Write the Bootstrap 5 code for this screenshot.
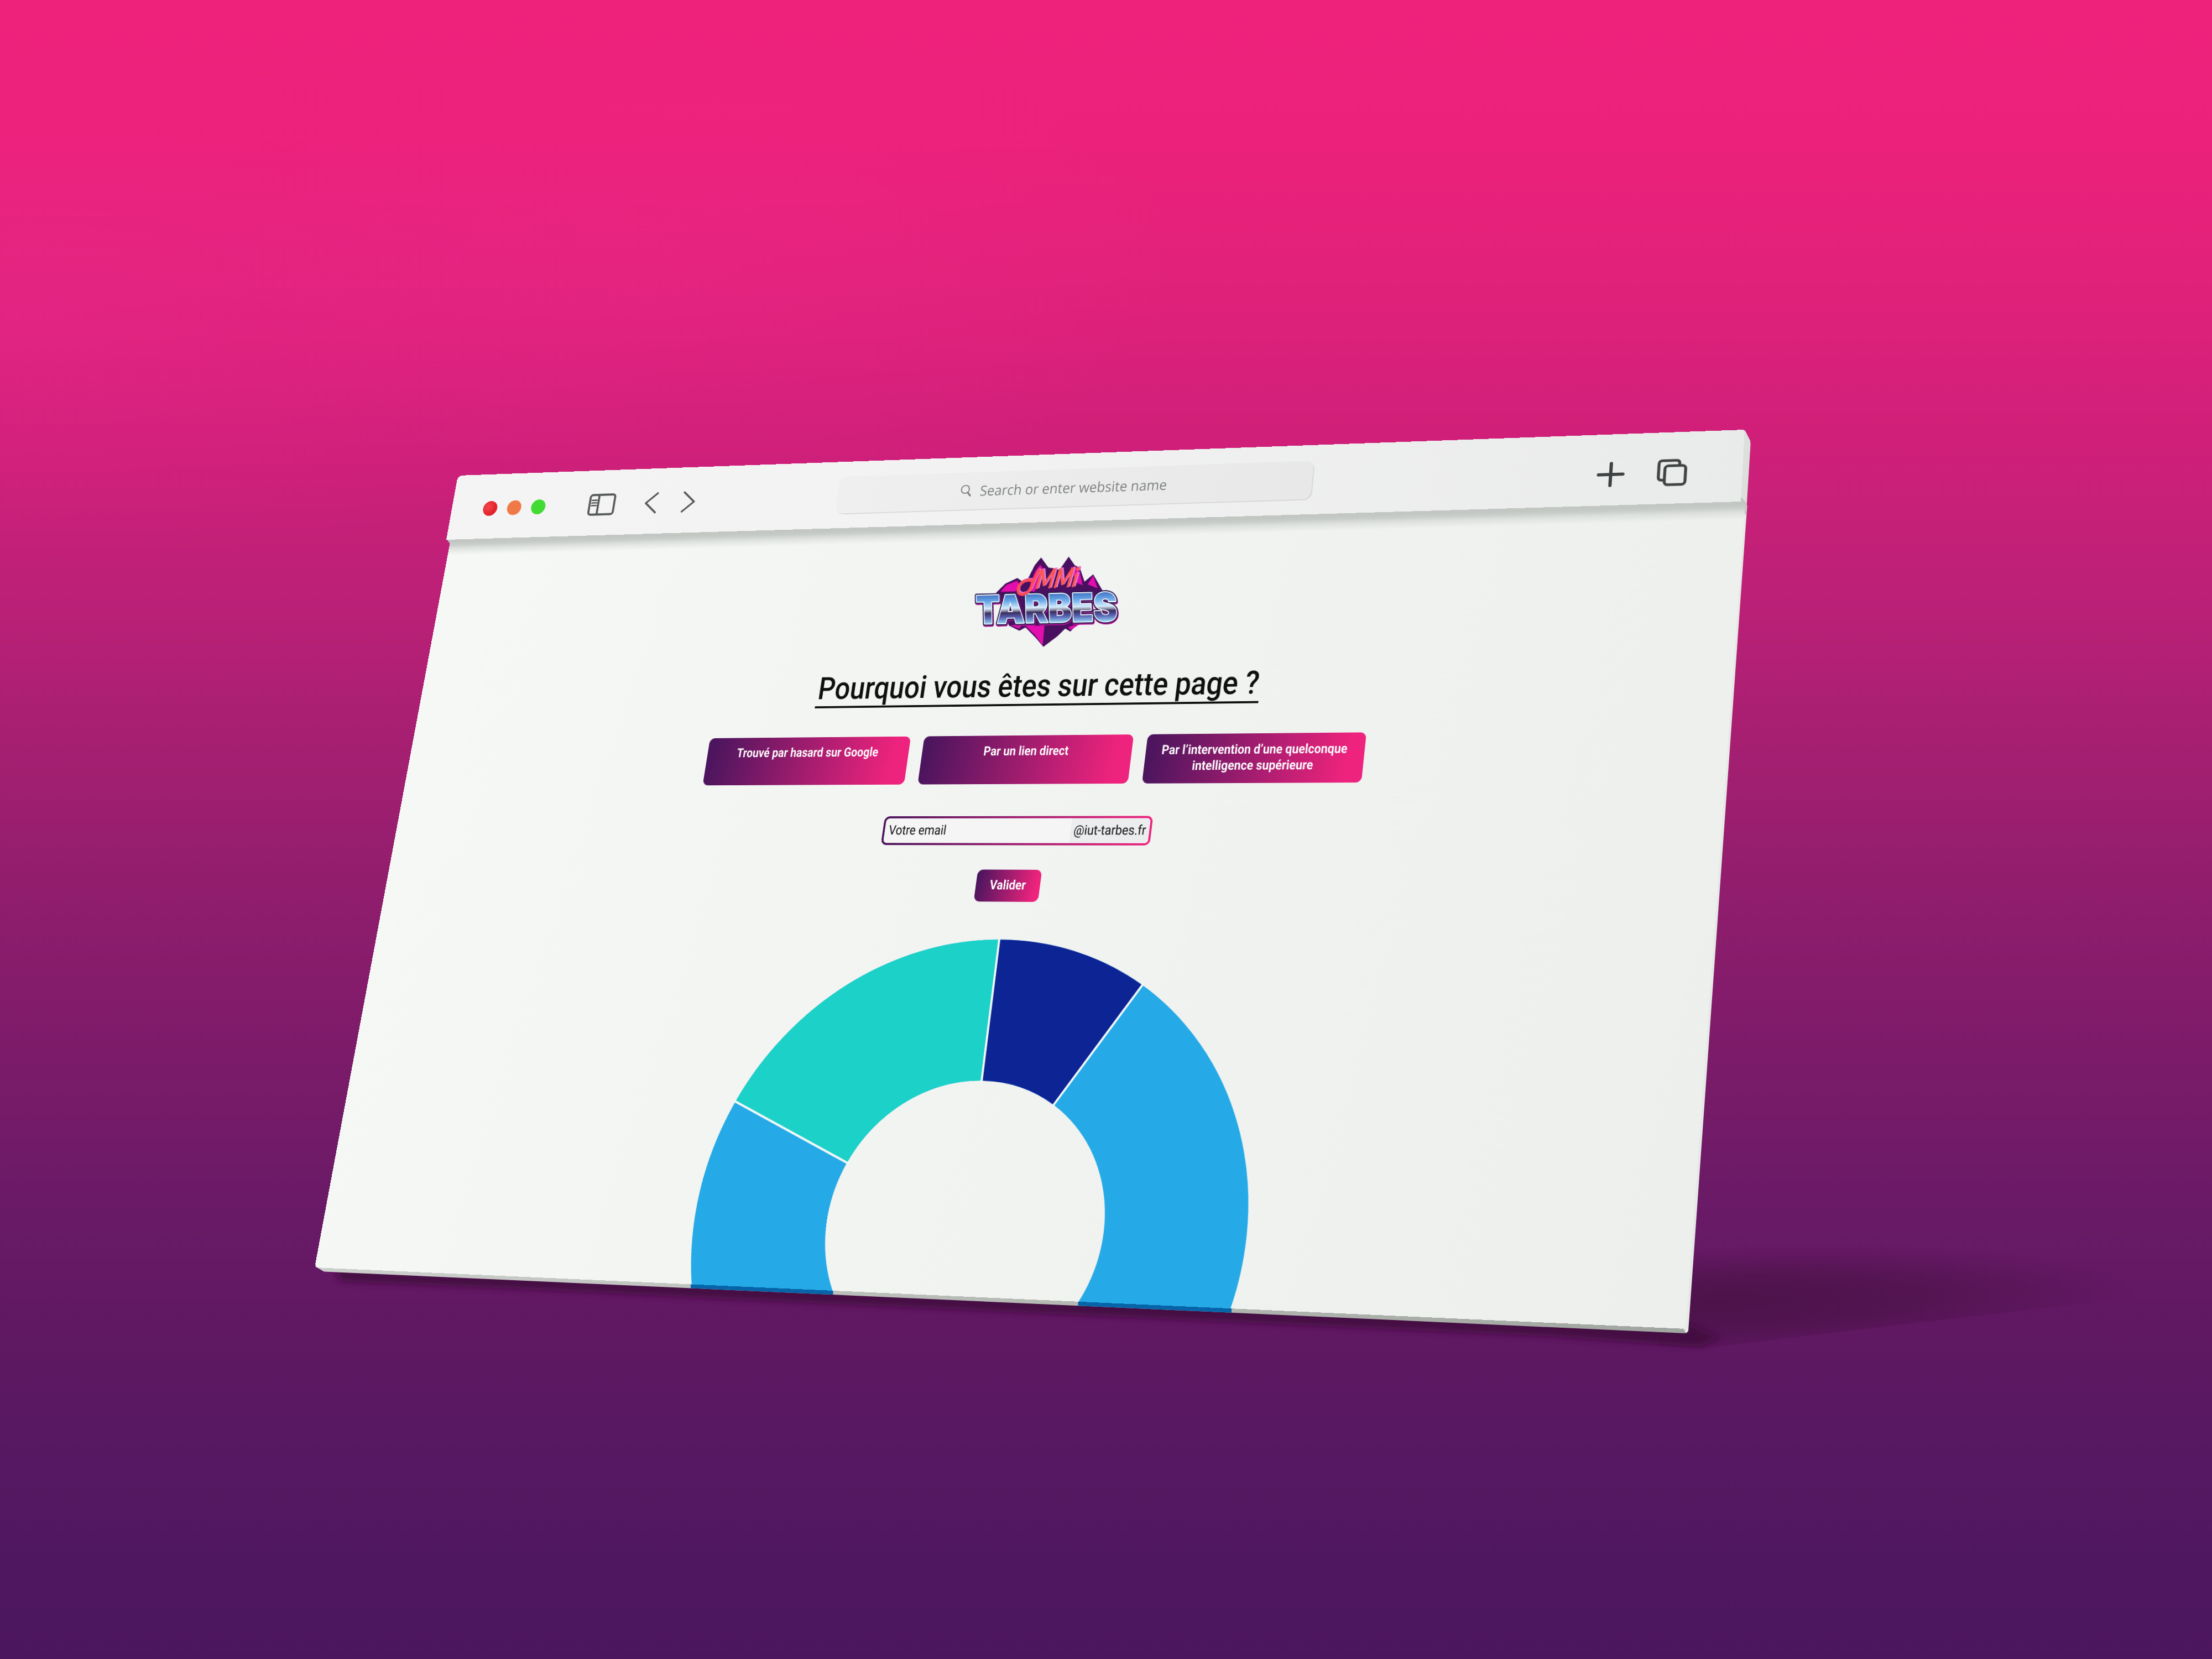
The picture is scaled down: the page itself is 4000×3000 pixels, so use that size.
<!DOCTYPE html>
<html lang="fr">
<head>
<meta charset="utf-8">
<title>MMI Tarbes</title>
<link href="https://cdn.jsdelivr.net/npm/bootstrap@5.3.0/dist/css/bootstrap.min.css" rel="stylesheet">
<style>
  body{width:4000px;height:3000px;margin:0;font-family:Roboto,"Liberation Sans",sans-serif;
    background:
      radial-gradient(ellipse 1300px 460px at 60px 560px,rgba(240,45,150,.28),transparent 100%),
      radial-gradient(ellipse 900px 420px at 1280px 480px,rgba(245,45,150,.2),transparent 100%),
      linear-gradient(180deg,#ee227b 0,#eb217b 260px,#e0217a 520px,#cf1f79 800px,#bd2077 1060px,#a61f71 1340px,#911d6d 1600px,#7c1b69 1900px,#6a1a66 2170px,#601862 2400px,#571862 2620px,#4e1760 2850px,#4c165f 3000px)}
  .scene-layer{left:0;top:0;width:4000px;height:3000px}
  /* both planes are flat boxes projected into the scene */
  .plane{left:0;top:0;width:2560px;transform-origin:0 0}
  .page-plane{height:1440px;background:linear-gradient(100deg,#f6f8f5 0,#f2f4f2 45%,#edefed 100%);border-radius:0 0 8px 8px;
    transform:matrix3d(.7723743,-.0677324,0,-.0000451424,-.1939653,.8151353,0,-.0000418742,0,0,1,0,814,980,0,1)}
  .page-plane::before{content:"";position:absolute;left:0;right:0;top:0;height:28px;background:linear-gradient(180deg,#c3c7c3 0,#c9cdc9 6px,rgba(214,218,214,.75) 14px,rgba(240,242,240,0) 28px)}
  .bar-plane{height:136px;background:linear-gradient(90deg,#f4f4f4 0,#f2f2f2 45%,#e9eaea 100%);border-radius:10px 8px 0 0;
    transform:matrix3d(.7721329,-.0661251,0,-.000043376,-.1918684,.8076404,0,-.0000464147,0,0,1,0,828,860,0,1)}
  .bar-left{padding-left:70px;width:830px}
  .dot{width:31px;height:31px;margin-right:22px}
  .search-field{width:942px;height:75px;border-radius:15px;background:linear-gradient(90deg,#efefef,#e8e8e8);box-shadow:2px 2px 1px rgba(150,155,150,.28);
    font:400 28px "Open Sans",sans-serif;color:#7d8080}
  .bar-right{width:788px;padding:18px 98px 0 0}
  .fit{display:block;white-space:nowrap;flex:none}
  .site{width:2552px;padding-top:62px}
  .ask{width:868px;line-height:67.5px;font-size:61px;font-weight:500;color:#0d100e;margin:40px 0 57px;border-bottom:4px solid #0d100e}
  .choices{gap:27px}
  .grad{background:linear-gradient(97deg,#4c155e 3%,#ee237d 92%);border:0;color:#fff;border-radius:11px;font-size:24.5px;line-height:30.6px;font-weight:700}
  .choice{width:409px;height:93px;padding:15px 0 0}
  .mail{width:521px;height:55px;margin-top:61px;border-radius:11px;padding:4px;background:linear-gradient(90deg,#4c155e,#ee237d);font-size:25px;line-height:46px;color:#111}
  .mail-in{background:#f4f5f4;border-radius:7px;overflow:hidden;height:47px}
  .mail-suffix{width:150px;background:#ecedee}
  .send{width:124px;height:60px;margin-top:46px;padding:14px 0 0}
  .donut{width:1040px;height:1040px;margin-top:70px;transform:translateX(2px)}
</style>
<script src="https://cdn.jsdelivr.net/npm/bootstrap@5.3.0/dist/js/bootstrap.bundle.min.js"></script>
</head>
<body class="position-relative overflow-hidden">

<!-- cast shadows and the visible thickness of the slabs -->
<svg class="scene-layer position-absolute" viewBox="0 0 4000 3000">
  <defs>
    <filter id="b6" x="-10%" y="-50%" width="120%" height="200%"><feGaussianBlur stdDeviation="6"/></filter>
    <radialGradient id="fade"><stop offset="0" stop-color="#430f3f" stop-opacity=".7"/><stop offset=".45" stop-color="#430f3f" stop-opacity=".5"/><stop offset="1" stop-color="#430f3f" stop-opacity="0"/></radialGradient>
    <linearGradient id="edge" x1="570" x2="3052" y1="0" y2="0" gradientUnits="userSpaceOnUse"><stop offset="0" stop-color="#cccfcb"/><stop offset="1" stop-color="#a0a69f"/></linearGradient>
    <clipPath id="edgeClip"><path d="M569.500 2290 L586 2299.500 L3047 2411 L3051 2408 L3046 2380 L620 2270Z"/></clipPath>
    <clipPath id="farClip"><path d="M3000 2200H4000V2330L3075 2438L3000 2434Z"/></clipPath>
  </defs>
  <g clip-path="url(#farClip)"><ellipse cx="3110" cy="2355" rx="760" ry="100" fill="url(#fade)" transform="rotate(-2 3110 2355)"/></g>
  <path d="M605 2295 L3060 2395 L3110 2420 L3075 2435 L2800 2416 L1340 2350 L950 2331 L615 2317Z" fill="#43103f" opacity=".9" filter="url(#b6)"/>
  <g clip-path="url(#edgeClip)">
    <path d="M560 2260H3060V2420H560Z" fill="url(#edge)"/>
    <path d="M1249 2290H1506.500V2360H1249Z M1949.500 2310H2227V2400H1949.500Z" fill="#0764a8"/>
  </g>
  <path d="M3140 914 L3159.500 914 L3053 2407 L3049 2411 L3045 2404 L3030 2390Z" fill="#e6e9e6"/>
  <path d="M3140 779 L3151 777 Q3155 777 3157 781 L3165 797 L3165.500 804 L3158.500 916 L3140 916Z" fill="#dcdfdc"/>
  <path d="M807 974 L3150 900 L3158.500 910 L3158 930 L820 1000 L813 982Z" fill="#c3c7c3"/>
</svg>

<main class="plane page-plane position-absolute overflow-hidden">
  <div class="site d-flex flex-column align-items-center">
    <svg width="296" height="182" viewBox="0 0 296 182" class="flex-shrink-0 overflow-visible">
      <defs>
        <linearGradient id="chrome" x1="0" y1="-160" x2="0" y2="4" gradientUnits="userSpaceOnUse">
          <stop offset="0" stop-color="#3f6fc0"/><stop offset=".25" stop-color="#6aa9ea"/><stop offset=".48" stop-color="#d4ecfb"/><stop offset=".57" stop-color="#8d8fa6"/><stop offset=".63" stop-color="#3a2d5e"/><stop offset=".78" stop-color="#5560b0"/><stop offset="1" stop-color="#9adcf8"/>
        </linearGradient>
      </defs>
      <g transform="matrix(.365 .008 .0487 .3617 -32.24 -19)">
        <path d="M185 245 L235 195 L300 165 L330 185 L360 165 L395 95 L430 52 L470 108 L500 112 L530 120 L580 48 L612 95 L640 110 L665 185 L712 145 L765 240 L640 400 L588 456 L560 440 L520 480 L442 540 L400 490 L345 435 L312 453 L255 425Z" fill="#4a1060"/>
        <path d="M208 240 L240 203 L300 180 L312 205 L290 238Z M372 190 L400 125 L425 92 L445 120 L420 150 L395 240 L370 235Z M590 105 L635 112 L655 205 L620 190Z M682 200 L712 152 L735 222Z M345 425 L448 425 L438 532 L400 480Z M262 424 L325 420 L312 442Z M575 432 L640 415 L590 448Z" fill="#e20fae"/>
        <g transform="translate(76 416) rotate(-1.4)" font-family="Inter,Lato,sans-serif" font-weight="900" font-size="212" stroke-linejoin="round">
          <text textLength="765" lengthAdjust="spacingAndGlyphs" fill="#b0128f" stroke="#b0128f" stroke-width="24" x="2" y="5">TARBES</text>
          <text textLength="765" lengthAdjust="spacingAndGlyphs" fill="#2b1f55" stroke="#2b1f55" stroke-width="22">TARBES</text>
          <text textLength="765" lengthAdjust="spacingAndGlyphs" fill="#fff" stroke="#fff" stroke-width="10">TARBES</text>
          <text textLength="765" lengthAdjust="spacingAndGlyphs" fill="url(#chrome)">TARBES</text>
        </g>
        <path d="M376 178 C340 172 304 195 302 228 C302 262 352 262 372 222 C384 198 395 160 418 124" fill="none" stroke="#e07ad8" stroke-width="16" stroke-linecap="round" transform="translate(6 -4)"/>
        <path d="M376 178 C340 172 306 195 304 232 C304 266 352 262 372 222 C384 198 395 160 418 124" fill="none" stroke="#fb4a58" stroke-width="16" stroke-linecap="round"/>
        <g transform="translate(394 226) rotate(-3) skewX(-14)" font-family="Lato,sans-serif" font-style="italic" font-weight="700" font-size="148">
          <text x="8" y="-4" textLength="226" lengthAdjust="spacingAndGlyphs" fill="#e07ad8">MMi</text>
          <text textLength="226" lengthAdjust="spacingAndGlyphs" fill="#fc5552">MMi</text>
        </g>
      </g>
    </svg>

    <h1 class="ask d-flex justify-content-center"><span class="fit" data-width="864">Pourquoi vous êtes sur cette page ?</span></h1>

    <div class="choices d-flex">
      <button class="btn grad choice d-flex flex-column align-items-center"><span class="fit" data-width="288">Trouvé par hasard sur Google</span></button>
      <button class="btn grad choice d-flex flex-column align-items-center"><span class="fit" data-width="166">Par un lien direct</span></button>
      <button class="btn grad choice d-flex flex-column align-items-center"><span class="fit" data-width="347">Par l’intervention d’une quelconque</span><span class="fit" data-width="226">intelligence supérieure</span></button>
    </div>

    <div class="mail">
      <div class="mail-in d-flex justify-content-between">
        <span class="fit ms-2" data-width="113" data-origin="left">Votre email</span>
        <span class="mail-suffix d-flex justify-content-center"><span class="fit" data-width="138">@iut-tarbes.fr</span></span>
      </div>
    </div>

    <button class="btn grad send d-flex flex-column align-items-center"><span class="fit" data-width="70">Valider</span></button>

    <svg class="donut flex-shrink-0" viewBox="-517 -517 1034 1034">
      <g transform="rotate(-90.5)" fill="none" stroke-width="257">
        <circle r="388" stroke="#25aae7"/>
        <circle r="388" stroke="#0c2494" pathLength="11" stroke-dasharray="1 10"/>
        <circle r="388" stroke="#1bd1c8" pathLength="11" stroke-dasharray="2 9" stroke-dashoffset="-9"/>
        <g stroke="#f4f8f8" stroke-width="4">
          <path d="M255 0H520"/><path d="M255 0H520" transform="rotate(32.73)"/><path d="M255 0H520" transform="rotate(-65.45)"/>
        </g>
      </g>
    </svg>
  </div>
</main>

<header class="plane bar-plane position-absolute d-flex align-items-center">
  <div class="bar-left d-flex align-items-center pt-2 flex-shrink-0">
    <span class="dot rounded-circle" style="background:radial-gradient(circle at 35% 40%,#f2474f,#e21f26 65%)"></span>
    <span class="dot rounded-circle" style="background:#ef7a48"></span>
    <span class="dot rounded-circle" style="background:#41db34"></span>
    <svg width="58" height="46" viewBox="0 0 58 46" fill="none" stroke="#555859" stroke-width="4.4" style="margin-left:72px">
      <rect x="2.5" y="2.5" width="53" height="41" rx="5"/><path d="M21 3V43"/><path d="M7 13.500H17M7 19H17M7 24.500H17" stroke-width="3.200" stroke-linecap="round"/>
    </svg>
    <svg width="30" height="44" viewBox="0 0 30 44" fill="none" stroke="#555859" stroke-width="3.800" stroke-linecap="round" stroke-linejoin="round" style="margin-left:63px"><path d="M26 2L3 22L26 42"/></svg>
    <svg width="30" height="44" viewBox="0 0 30 44" fill="none" stroke="#555859" stroke-width="3.800" stroke-linecap="round" stroke-linejoin="round" style="margin-left:49px"><path d="M4 2L27 22L4 42"/></svg>
  </div>
  <div class="search-field d-flex align-items-center flex-shrink-0">
    <svg width="24" height="26" viewBox="0 0 24 26" fill="none" stroke="#7d8080" stroke-width="2.200" style="margin-left:251px;margin-right:16px"><circle cx="10" cy="10" r="8"/><path d="M16 17L21 23" stroke-width="3.500" stroke-linecap="round"/></svg>
    <span class="fit" data-width="371" data-origin="left">Search or enter website name</span>
  </div>
  <div class="bar-right d-flex align-items-center justify-content-end flex-shrink-0">
    <svg width="50" height="48" viewBox="0 0 50 48" stroke="#3f4243" stroke-width="6" stroke-linecap="round" style="margin-right:58px"><path d="M25 3V45M3 24H47"/></svg>
    <svg width="54" height="52" viewBox="0 0 54 52" fill="none" stroke="#3f4243" stroke-width="5.200" stroke-linejoin="round"><rect x="14" y="13" width="37" height="36" rx="6"/><path d="M14 40H9Q3 40 3 34V9Q3 3 9 3H34Q40 3 40 9V13"/></svg>
  </div>
</header>

<script>
  // condense each label to the width set in its data attribute
  document.querySelectorAll('.fit').forEach(function (el) {
    el.style.transformOrigin = (el.dataset.origin || 'center') + ' center';
    el.style.transform = 'scaleX(' + el.dataset.width / el.offsetWidth + ')';
  });
</script>
</body>
</html>
